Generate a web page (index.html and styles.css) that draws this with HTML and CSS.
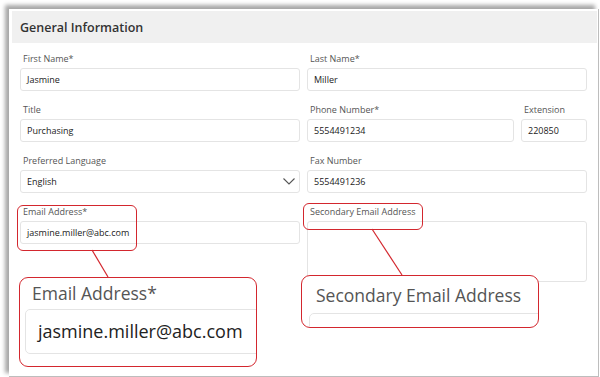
FILE: index.html
```html
<!DOCTYPE html>
<html lang="en">
<head>
    <meta charset="UTF-8">
    <title>General Information</title>
    <link rel="stylesheet" href="styles.css">
</head>
<body>

<div class="window">
    <div class="panel-header">General Information</div>

    <div class="form">
        <div class="field">
            <label>First Name*</label>
            <div class="input">Jasmine</div>
        </div>
        <div class="field">
            <label>Last Name*</label>
            <div class="input">Miller</div>
        </div>

        <div class="field">
            <label>Title</label>
            <div class="input">Purchasing</div>
        </div>
        <div class="split">
            <div class="field grow">
                <label>Phone Number*</label>
                <div class="input">5554491234</div>
            </div>
            <div class="field ext">
                <label>Extension</label>
                <div class="input">220850</div>
            </div>
        </div>

        <div class="field">
            <label>Preferred Language</label>
            <div class="input select">
                English
                <svg class="chevron" width="12" height="7" viewBox="0 0 12 7">
                    <path d="M0.5 0.5 L6 6 L11.5 0.5" fill="none" stroke="#555" stroke-width="1.1"/>
                </svg>
            </div>
        </div>
        <div class="field">
            <label>Fax Number</label>
            <div class="input">5554491236</div>
        </div>

        <div class="field">
            <label>Email Address*</label>
            <div class="input">jasmine.miller@abc.com</div>
        </div>
        <div class="field">
            <label>Secondary Email Address</label>
            <div class="input textarea"></div>
        </div>
    </div>

    <!-- annotation overlay -->
    <div class="mark mark-email"></div>
    <div class="mark mark-secondary"></div>

    <svg class="leaders" width="600" height="377">
        <line x1="92" y1="250" x2="108" y2="277"/>
        <line x1="372" y1="229" x2="402" y2="275"/>
    </svg>

    <div class="callout callout-email">
        <div class="big-label">Email Address*</div>
        <div class="big-input">jasmine.miller@abc.com</div>
    </div>
    <div class="callout callout-secondary">
        <div class="big-label">Secondary Email Address</div>
        <div class="big-input"></div>
    </div>
</div>

</body>
</html>
```

FILE: styles.css
```css
* {
    box-sizing: border-box;
}
body {
    margin: 0;
    font-family: "Open Sans", "Noto Sans", sans-serif;
    background: white;
    width: 600px;
    height: 377px;
    overflow: hidden;
}
.window {
    position: relative;
    margin: 9px 0 0 9px;
    width: 590px;
    height: 368px;
    background: white;
    border-right: 1px solid #bdbdbd;
    border-bottom: 1px solid #bdbdbd;
    box-shadow: -4px -4px 4px rgba(0, 0, 0, 0.35);
    padding: 2px 1px 0 3px;
}
.panel-header {
    background: #f0f0f0;
    height: 32px;
    padding: 1px 0 0 8px;
    font-size: 12.5px;
    font-weight: 600;
    color: #333;
    line-height: 32px;
}
.form {
    display: grid;
    grid-template-columns: 280px 280px;
    column-gap: 7px;
    row-gap: 13px;
    padding: 10px 0 0 8px;
}
.field {
    display: flex;
    flex-direction: column;
}
.field label {
    font-size: 9px;
    line-height: 12px;
    color: #555;
    padding-left: 3px;
    margin-bottom: 3px;
}
.input {
    height: 23px;
    border: 1px solid #e4e4e4;
    border-radius: 3px;
    padding: 0 6px;
    font-size: 9px;
    line-height: 21px;
    color: #222;
}
.select {
    display: flex;
    justify-content: space-between;
    align-items: center;
}
.chevron {
    margin-right: -2px;
}
.textarea {
    height: 61px;
}
.split {
    display: flex;
    gap: 7px;
}
.grow {
    flex: 1;
}
.ext {
    width: 66px;
}

/* annotations */
.mark {
    position: absolute;
    border: 1.5px solid #d3272e;
    border-radius: 6px;
}
.mark-email {
    left: 8px;
    top: 196px;
    width: 120px;
    height: 46px;
}
.mark-secondary {
    left: 294px;
    top: 194px;
    width: 120px;
    height: 27px;
}
.leaders {
    position: absolute;
    left: -9px;
    top: -9px;
}
.leaders line {
    stroke: #d3272e;
    stroke-width: 1.2;
}
.callout {
    position: absolute;
    background: white;
    border: 1.5px solid #d3272e;
    border-radius: 9px;
    overflow: hidden;
}
.callout-email {
    left: 10px;
    top: 268px;
    width: 238px;
    height: 90px;
    padding: 3px 0 0 5px;
}
.callout-secondary {
    left: 292px;
    top: 266px;
    width: 238px;
    height: 53px;
    padding: 7px 0 0 7px;
}
.big-label {
    font-size: 17.5px;
    line-height: 24px;
    color: #555;
    padding-left: 7px;
}
.big-input {
    margin-top: 4px;
    width: 300px;
    height: 45px;
    border: 1.5px solid #e4e4e4;
    border-radius: 5px;
    padding-left: 12px;
    font-size: 18px;
    line-height: 42px;
    color: #222;
}
.callout-secondary .big-input {
    margin-top: 6px;
}
```
